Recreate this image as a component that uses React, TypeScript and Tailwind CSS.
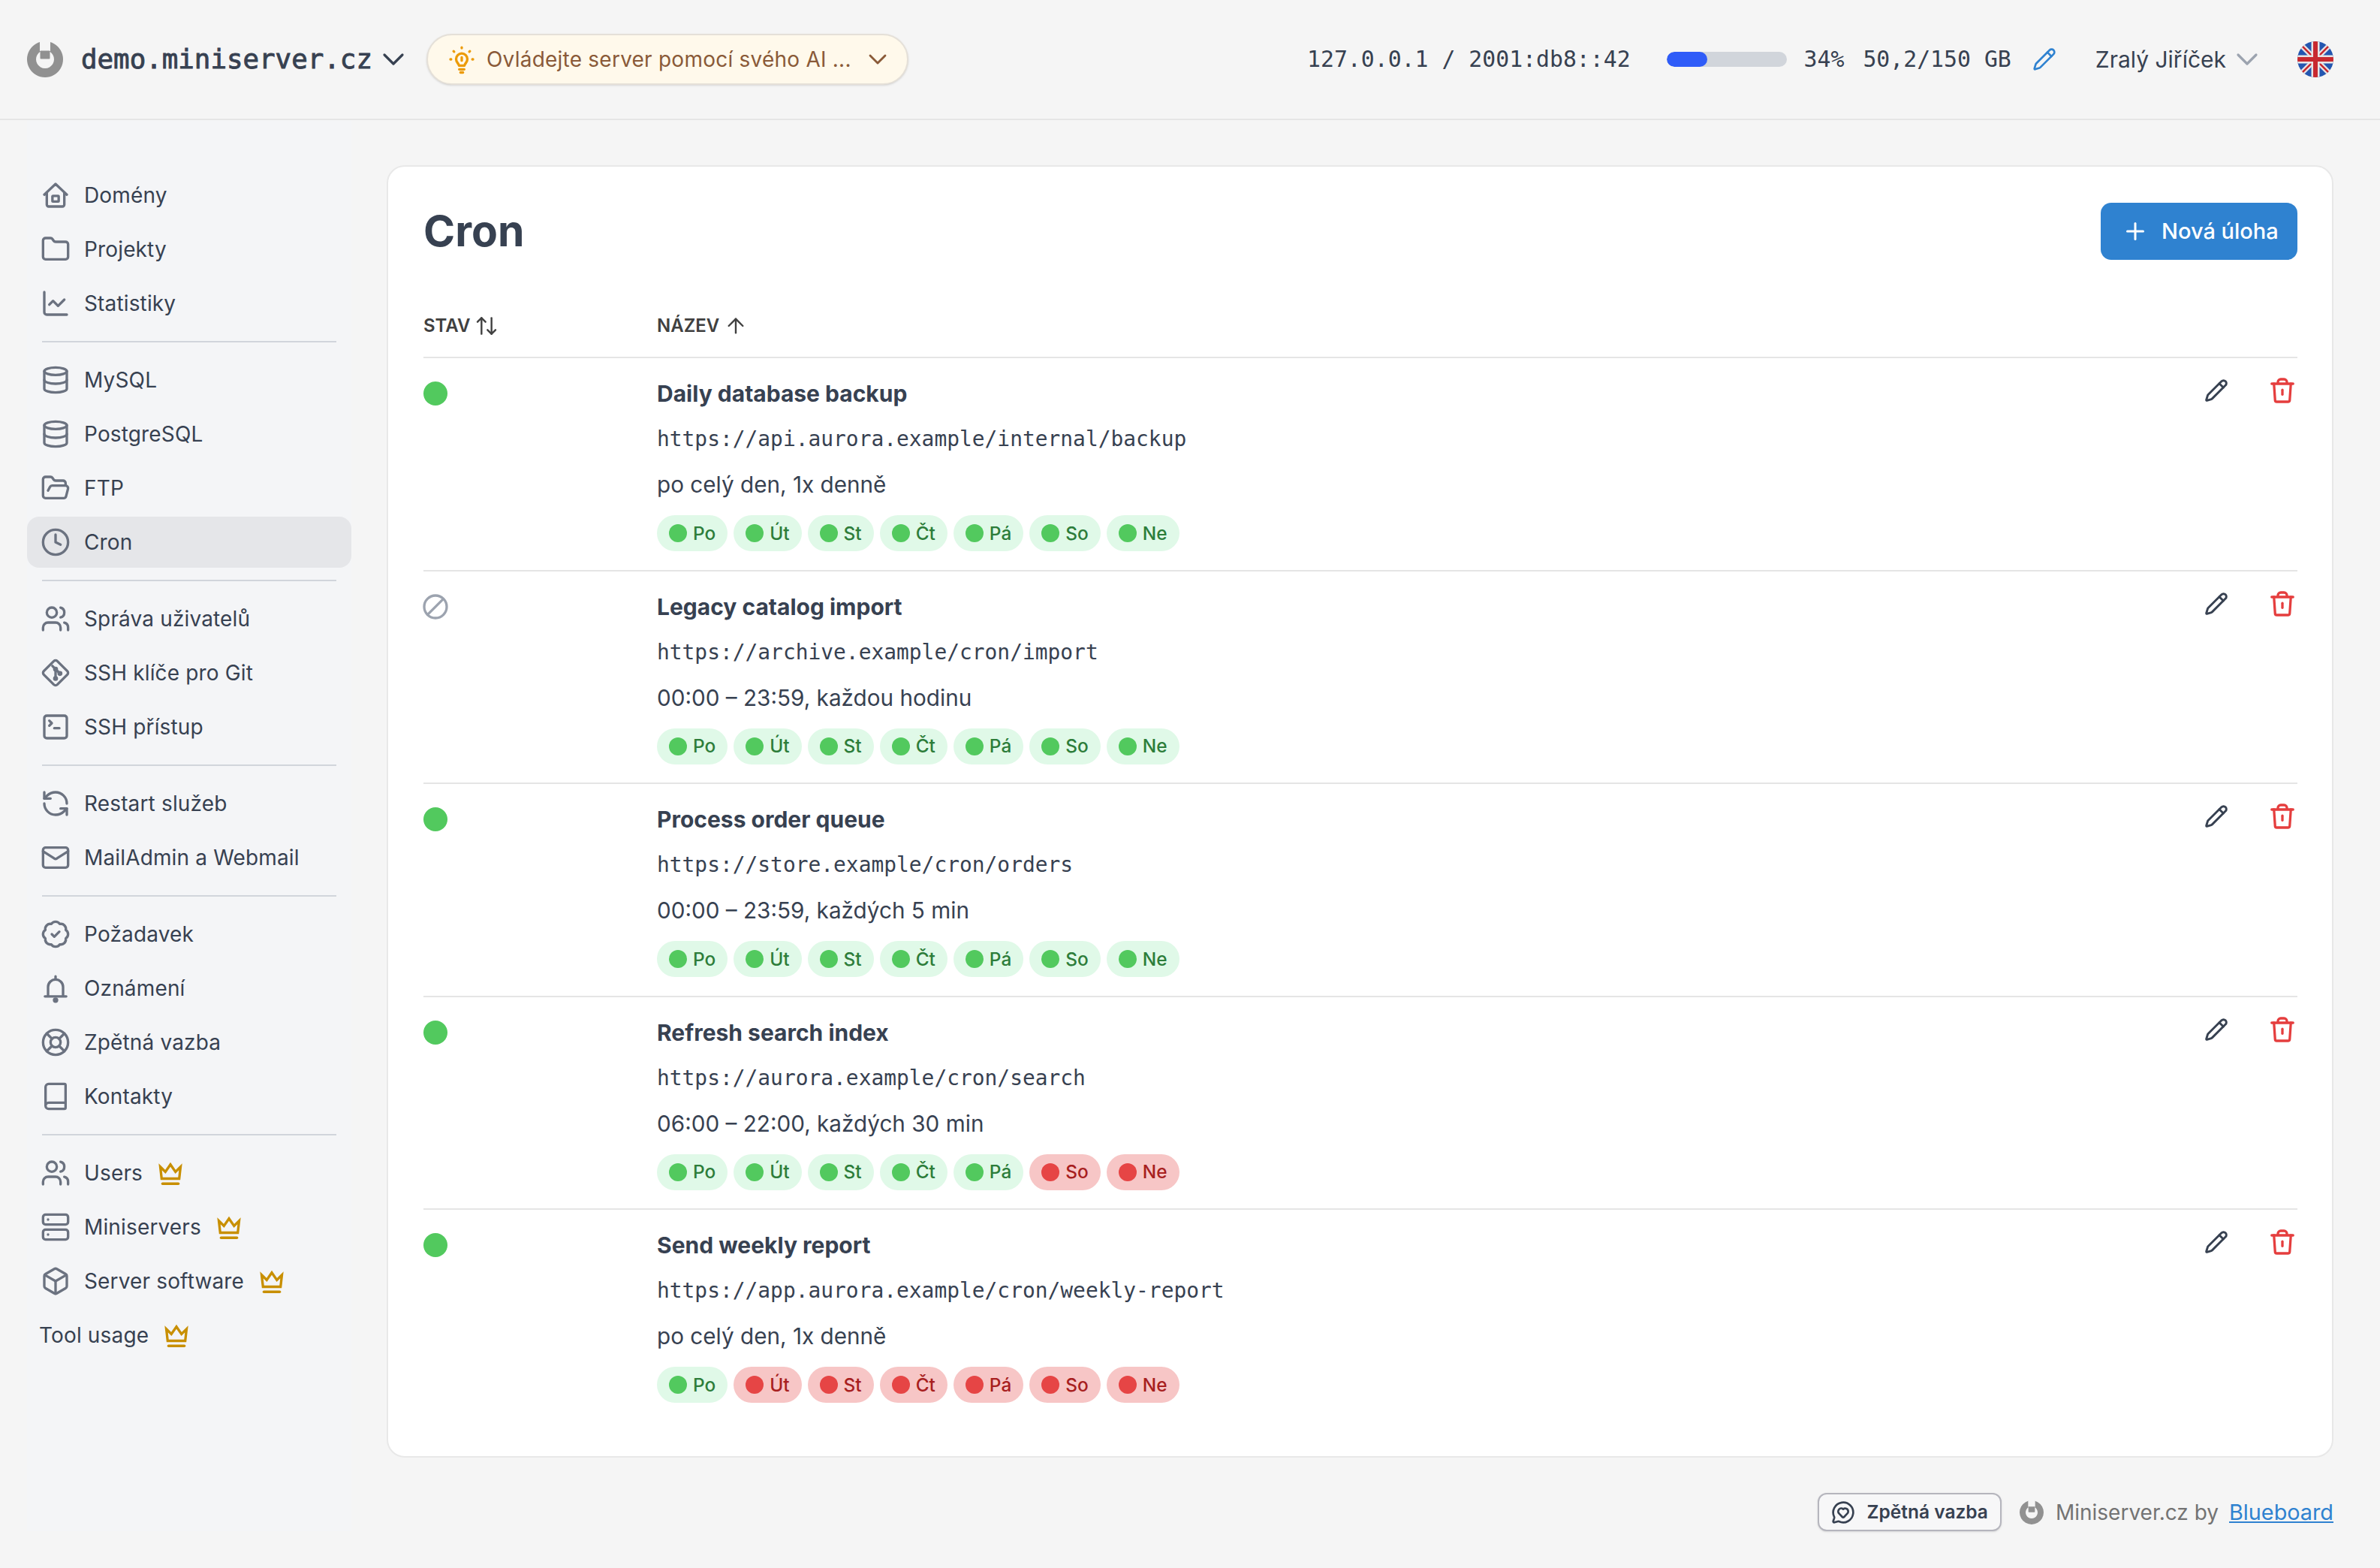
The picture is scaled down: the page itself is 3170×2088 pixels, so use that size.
import React from "react";
import {
  Folder, ChartLine, Database, FolderOpen, Clock, Users, SquareTerminal, RefreshCcw, Mail, BadgeCheck, LifeBuoy, Book, Server, Box, ChevronDown, Pencil, Plus, ArrowUp, ArrowUpDown, Ban, MessageCircleHeart,
} from "lucide-react";

const sans = "font-['Inter',sans-serif]";
const mono = "font-['DejaVu_Sans_Mono',monospace]";

const Logo = ({ size }: { size: string }) => (
  <svg viewBox="0 0 48 48" className={size}>
    <path fillRule="evenodd" d="M24 0a24 24 0 1 1-.01 0ZM24 12a12 12 0 1 0 .01 0Z" fill="#919191" />
    <rect x="17" y="-1" width="14" height="14" fill="#f5f5f5" />
    <rect x="17.5" y="12.5" width="13" height="11" rx="1" fill="#919191" />
  </svg>
);

const HomeIcon = (p: { className?: string; strokeWidth?: number }) => (
  <svg viewBox="0 0 24 24" fill="none" stroke="currentColor" strokeWidth="2" strokeLinecap="round" strokeLinejoin="round" className={p.className}>
    <path d="M3 11.500 12 3l9 8.500M5 10v9.500a1.500 1.500 0 0 0 1.500 1.500h11a1.500 1.500 0 0 0 1.500-1.500V10" />
    <rect x="9.500" y="12.500" width="5" height="4.500" rx="0.500" />
  </svg>
);

const BellIcon = (p: { className?: string; strokeWidth?: number }) => (
  <svg viewBox="0 0 24 24" fill="none" stroke="currentColor" strokeWidth="2" strokeLinecap="round" strokeLinejoin="round" className={p.className}>
    <path d="M6 18v-7a6 6 0 0 1 12 0v7" />
    <path d="M3.500 18.500h17M12 2.500v2" />
    <circle cx="12" cy="21.500" r="1.200" fill="currentColor" />
  </svg>
);

const GitDiamond = (p: { className?: string; strokeWidth?: number }) => (
  <svg viewBox="0 0 24 24" fill="none" stroke="currentColor" strokeWidth="2" strokeLinecap="round" strokeLinejoin="round" className={p.className}>
    <path d="M10.600 2.600a2 2 0 0 1 2.800 0l8 8a2 2 0 0 1 0 2.800l-8 8a2 2 0 0 1-2.800 0l-8-8a2 2 0 0 1 0-2.800z" />
    <path d="M9.500 6.500l2.500 2.500M12 9v7M12 9l3.500 3.500" />
    <circle cx="12" cy="16.500" r="1" fill="currentColor" />
    <circle cx="12" cy="9" r="1" fill="currentColor" />
    <circle cx="15.500" cy="12.500" r="1" fill="currentColor" />
  </svg>
);

const CrownIcon = () => (
  <svg viewBox="0 0 24 24" fill="none" stroke="#c88f00" strokeWidth="2.200" strokeLinecap="round" strokeLinejoin="miter" className="ml-[19px] h-9 w-9">
    <path d="M3 6.500 7.500 11 12 4.500 16.500 11 21 6.500 19.800 17H4.200Z" />
    <path d="M5 21.500H19" strokeWidth="2.400" />
  </svg>
);

const BulbIcon = () => (
  <svg viewBox="0 0 24 24" fill="none" stroke="#ec9b08" strokeWidth="2" strokeLinecap="round" strokeLinejoin="round" className="h-10 w-10 shrink-0">
    <path d="M9.800 17c0-1.500-2.300-2.400-2.300-5.200a4.500 4.500 0 0 1 9 0c0 2.800-2.300 3.700-2.300 5.200Z" />
    <path d="M10 20h4M11 22.500h2M12 10.500v2.500" />
    <path d="M12 2.500v.5M5.500 5.500l.4.400M18.500 5.500l-.4.400M3 12h.5M20.500 12h.5" />
  </svg>
);

const TrashIcon = () => (
  <svg viewBox="0 0 24 24" fill="none" stroke="#e53e3e" strokeWidth="2.200" strokeLinecap="round" strokeLinejoin="round" className="h-9 w-9">
    <path d="M2.500 6h19M8 6V4.500a2.500 2.500 0 0 1 2.500-2.500h3A2.500 2.500 0 0 1 16 4.500V6" />
    <path d="M4.500 6l1 14.500A1.500 1.500 0 0 0 7 22h10a1.500 1.500 0 0 0 1.500-1.500l1-14.500" />
    <path d="M12 11.500v4" />
  </svg>
);

const Flag = () => (
  <svg viewBox="0 0 48 48" className="h-12 w-12">
    <defs><clipPath id="flagc"><circle cx="24" cy="24" r="24" /></clipPath></defs>
    <g clipPath="url(#flagc)">
      <rect width="48" height="48" fill="#2356b0" />
      <path d="M0 0L48 48M48 0L0 48" stroke="#e8e4e4" strokeWidth="7" />
      <path d="M0 0L48 48M48 0L0 48" stroke="#c8292f" strokeWidth="2.500" />
      <path d="M24 0V48M0 24H48" stroke="#e8e4e4" strokeWidth="11" />
      <path d="M24 0V48M0 24H48" stroke="#c8292f" strokeWidth="6" />
    </g>
  </svg>
);

const icons: Record<string, any> = { HomeIcon, Folder, ChartLine, Database, FolderOpen, Clock, Users, GitDiamond, SquareTerminal, RefreshCcw, Mail, BadgeCheck, BellIcon, LifeBuoy, Book, Server, Box };

type Item = { label: string; icon?: string; crown?: boolean; active?: boolean };
const groups: Item[][] = [
  [{ label: "Domény", icon: "HomeIcon" }, { label: "Projekty", icon: "Folder" }, { label: "Statistiky", icon: "ChartLine" }],
  [{ label: "MySQL", icon: "Database" }, { label: "PostgreSQL", icon: "Database" }, { label: "FTP", icon: "FolderOpen" }, { label: "Cron", icon: "Clock", active: true }],
  [{ label: "Správa uživatelů", icon: "Users" }, { label: "SSH klíče pro Git", icon: "GitDiamond" }, { label: "SSH přístup", icon: "SquareTerminal" }],
  [{ label: "Restart služeb", icon: "RefreshCcw" }, { label: "MailAdmin a Webmail", icon: "Mail" }],
  [{ label: "Požadavek", icon: "BadgeCheck" }, { label: "Oznámení", icon: "BellIcon" }, { label: "Zpětná vazba", icon: "LifeBuoy" }, { label: "Kontakty", icon: "Book" }],
  [{ label: "Users", icon: "Users", crown: true }, { label: "Miniservers", icon: "Server", crown: true }, { label: "Server software", icon: "Box", crown: true }, { label: "Tool usage", crown: true }],
];

const NavRow = ({ item }: { item: Item }) => {
  const I = item.icon ? icons[item.icon] : null;
  return (
    <div className={`flex h-[68px] items-center rounded-2xl ${item.active ? "bg-[#e5e6e9]" : ""} ${I ? "pl-[18px]" : "pl-[16px]"}`}>
      {I && <I className="mr-[18px] h-10 w-10 text-[#6b7280]" strokeWidth={2} />}
      <span className="text-[28px] leading-none tracking-[0.15px] text-[#374151]">{item.label}</span>
      {item.crown && <CrownIcon />}
    </div>
  );
};

const days = ["Po", "Út", "St", "Čt", "Pá", "So", "Ne"];
type Job = { name: string; url: string; sched: string; on: boolean; red: number[] };
const jobs: Job[] = [
  { name: "Daily database backup", url: "https://api.aurora.example/internal/backup", sched: "po celý den, 1x denně", on: true, red: [] },
  { name: "Legacy catalog import", url: "https://archive.example/cron/import", sched: "00:00 – 23:59, každou hodinu", on: false, red: [] },
  { name: "Process order queue", url: "https://store.example/cron/orders", sched: "00:00 – 23:59, každých 5 min", on: true, red: [] },
  { name: "Refresh search index", url: "https://aurora.example/cron/search", sched: "06:00 – 22:00, každých 30 min", on: true, red: [5, 6] },
  { name: "Send weekly report", url: "https://app.aurora.example/cron/weekly-report", sched: "po celý den, 1x denně", on: true, red: [1, 2, 3, 4, 5, 6] },
];

const Pill = ({ d, red }: { d: string; red: boolean }) => (
  <span className={`flex h-12 items-center gap-2 rounded-full pl-4 pr-4 text-[24.4px] leading-none font-medium ${red ? "bg-[#f7c6c6] text-[#a81f1f]" : "bg-[#e0f9e8] text-[#2d7d3a]"}`}>
    <span className={`h-6 w-6 rounded-full ${red ? "bg-[#e64545]" : "bg-[#52c95e]"}`} />
    {d}
  </span>
);

const JobRow = ({ job, last }: { job: Job; last: boolean }) => (
  <div className={`flex h-[283.5px] pt-[29px] ${last ? "" : "border-b-2 border-[#e5e5e5]"}`}>
    <div className="w-[311px] shrink-0 pt-[2px]">
      {job.on ? <div className="h-8 w-8 rounded-full bg-[#52c95e]" /> : <Ban className="h-9 w-9 -ml-0.5 -mt-0.5 -scale-x-100 text-[#9ca3af]" strokeWidth={2.2} />}
    </div>
    <div className="flex-1">
      <div className="h-9 text-[30px] leading-9 font-bold text-[#374151]">{job.name}</div>
      <div className={`mt-[23px] h-10 ${mono} text-[27.9px] leading-10 text-[#374151]`}>{job.url}</div>
      <div className="mt-[20px] h-10 text-[29.7px] leading-10 text-[#374151]">{job.sched}</div>
      <div className="mt-[21px] flex gap-2">
        {days.map((d, i) => <Pill key={d} d={d} red={job.red.includes(i)} />)}
      </div>
    </div>
    <div className="-mt-[2px] flex h-8 items-center gap-[54px] pr-[2px]">
      <Pencil className="h-8 w-8 text-[#374151]" strokeWidth={2.2} />
      <TrashIcon />
    </div>
  </div>
);

export default function App() {
  return (
    <div className={`${sans} min-h-[2088px] w-[3170px] bg-[#f5f5f5] text-[#374151]`}>
      <header className="flex h-[160px] items-center border-b-2 border-[#e5e5e5] pl-9 pr-[62px]">
        <Logo size="h-12 w-12" />
        <span className={`ml-6 ${mono} text-[35.8px] font-normal text-[#374151] [-webkit-text-stroke:0.9px_#374151]`}>demo.miniserver.cz</span>
        <ChevronDown className="ml-[4px] h-12 w-12 text-[#374151]" strokeWidth={1.6} />
        <div className="ml-[20px] flex h-[68px] w-[642px] items-center rounded-full border-2 border-[#e5e0d8] bg-[#fff9eb] pl-[25px] shadow-sm">
          <BulbIcon />
          <span className="ml-[13px] text-[28px] tracking-[0.23px] text-[#8a5a38]">Ovládejte server pomocí svého AI ...</span>
          <ChevronDown className="ml-[15px] h-10 w-10 text-[#8a5a38]" strokeWidth={1.7} />
        </div>
        <div className={`ml-auto flex items-center ${mono} text-[29.8px] text-[#374151]`}>
          <span>127.0.0.1 / 2001:db8::42</span>
          <div className="ml-[48px] h-5 w-[160px] overflow-hidden rounded-full bg-[#d1d5db]">
            <div className="h-full rounded-full bg-[#2f5cf8]" style={{ width: "34%" }} />
          </div>
          <span className="ml-[23px]">34%</span>
          <span className="ml-[25px]">50,2/150 GB</span>
          <Pencil className="ml-[28px] h-8 w-8 text-[#2f82d0]" strokeWidth={2} />
        </div>
        <span className="ml-[52px] text-[30px] text-[#374151]">Zralý Jiříček</span>
        <ChevronDown className="ml-[4px] h-12 w-12 text-[#9ca3af]" strokeWidth={1.6} />
        <div className="ml-[43px]"><Flag /></div>
      </header>

      <div className="flex items-start pr-[62px]">
        <aside className="ml-9 w-[432px] shrink-0 self-stretch bg-[#f4f5f7] pt-[66px]">
          {groups.map((g, gi) => (
            <div key={gi}>
              {gi > 0 && <div className="mx-5 my-4 h-0.5 bg-[#d1d5db]" />}
              <div className="flex flex-col gap-1">
                {g.map((it) => <NavRow key={it.label} item={it} />)}
              </div>
            </div>
          ))}
        </aside>
        <div className="ml-[47px] flex-1 pt-[60px]">
          <main className="h-[1721px] rounded-3xl border-2 border-[#e8e8e8] bg-white pl-[47px] pr-[46px]">
            <div className="flex h-[188px] items-start justify-between pt-[48px]">
              <h1 className="text-[57px] leading-[76px] font-bold text-[#374151]">Cron</h1>
              <button className="flex h-[76px] w-[262px] items-center rounded-[14px] bg-[#2f82d0] pl-[28px] text-[29px] font-medium text-white">
                <Plus className="h-9 w-9" strokeWidth={2} />
                <span className="ml-[17px]">Nová úloha</span>
              </button>
            </div>
            <div className="flex h-[67px] items-start border-b-2 border-[#e5e5e5] pt-[6px] text-[24px] font-semibold text-[#404040]">
              <div className="flex w-[311px] items-center gap-1.5"><span>STAV</span><ArrowUpDown className="h-8 w-8" strokeWidth={1.8} /></div>
              <div className="flex items-center gap-1.5"><span>NÁZEV</span><ArrowUp className="h-8 w-8" strokeWidth={1.8} /></div>
            </div>
            {jobs.map((j, i) => <JobRow key={j.name} job={j} last={i === jobs.length - 1} />)}
          </main>
          <footer className="mt-[47px] flex items-center justify-end">
            <button className="flex h-[51px] items-center gap-[16px] rounded-xl border-2 border-[#b5b5bd] bg-[#f7f7f8] pl-4 pr-4 text-[24.5px] font-semibold text-[#374151] shadow-sm">
              <MessageCircleHeart className="h-8 w-8" strokeWidth={2} />
              Zpětná vazba
            </button>
            <div className="ml-6"><Logo size="h-8 w-8" /></div>
            <span className="ml-4 text-[28px] text-[#737373]">Miniserver.cz by</span>
            <a className="ml-[14px] text-[28.8px] text-[#2f82d0] underline">Blueboard</a>
          </footer>
        </div>
      </div>
    </div>
  );
}
